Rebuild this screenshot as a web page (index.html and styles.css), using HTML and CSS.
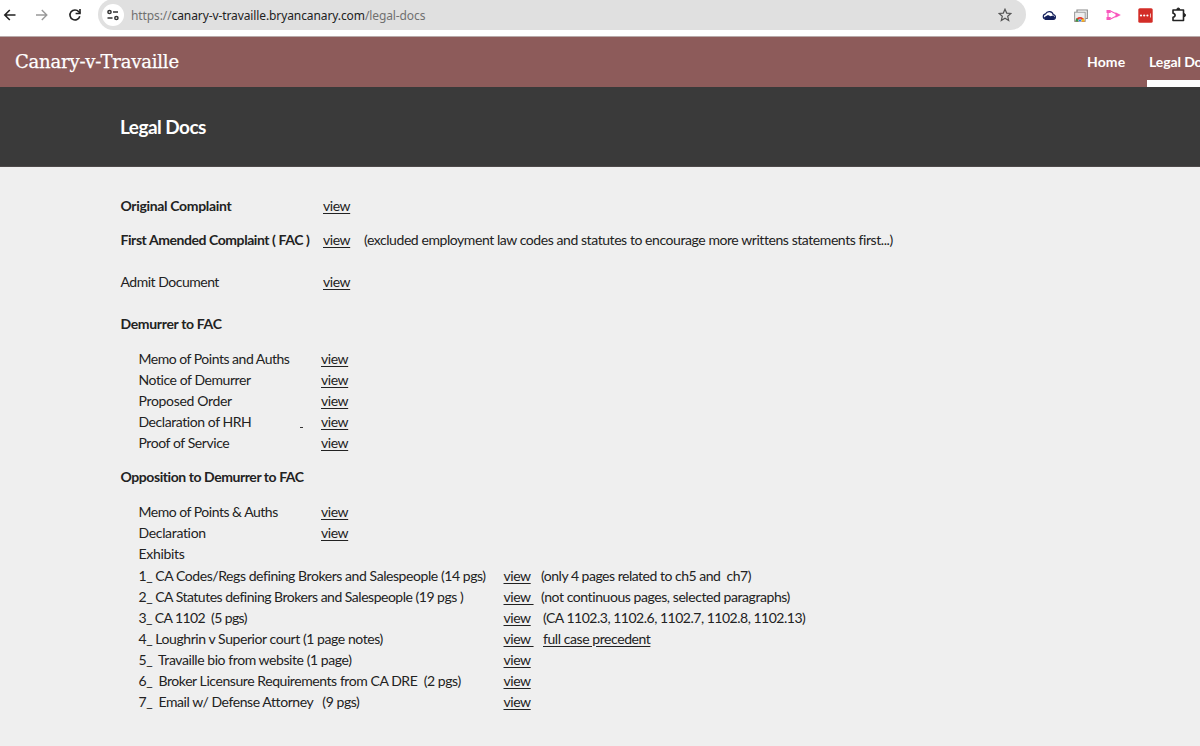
FILE: index.html
```html
<!DOCTYPE html>
<html lang="en">
<head>
<meta charset="utf-8">
<title>Legal Docs</title>
<link rel="stylesheet" href="styles.css">
</head>
<body>
<div class="browser">
  <svg class="nav-icon back" width="14" height="14" viewBox="0 0 14 14"><path d="M12.5 7H2M6.8 2 1.8 7l5 5" fill="none" stroke="#222" stroke-width="1.6"/></svg>
  <svg class="nav-icon forward" width="14" height="14" viewBox="0 0 14 14"><path d="M1 7h10.5M6.8 2l5 5-5 5" fill="none" stroke="#999" stroke-width="1.4"/></svg>
  <svg class="nav-icon reload" width="14" height="14" viewBox="0 0 14 14"><path d="M11.8 8.3A5 5 0 1 1 10.8 3.7L12 5" fill="none" stroke="#222" stroke-width="1.6"/><path d="M12 1v4.500H7.600" fill="none" stroke="#222" stroke-width="1.600"/></svg>
  <div class="address">
    <span class="site-info"><svg width="14" height="12" viewBox="0 0 14 12" fill="none" stroke="#333" stroke-width="1.5"><circle cx="3.5" cy="3" r="1.6"/><path d="M7 3h5M1.5 9h5"/><circle cx="10.4" cy="9" r="1.6"/></svg></span>
    <span class="url"><span class="dim">https://</span>canary-v-travaille.bryancanary.com<span class="dim">/legal-docs</span></span>
    <svg class="star" width="14" height="14" viewBox="0 0 14 14"><path d="M7 1.2l1.7 3.9 4.2.4-3.2 2.8 1 4.2L7 10.3l-3.7 2.2 1-4.2L1.1 5.5l4.2-.4z" fill="none" stroke="#555" stroke-width="1.2"/></svg>
  </div>
  <div class="extensions">
    <svg width="14" height="12" viewBox="0 0 14 12"><path d="M3.5 10.3h7.5a2.3 2.3 0 0 0 .2-4.6A4.1 4.1 0 0 0 3.6 4.8a2.8 2.8 0 0 0-.1 5.5z" fill="#fff" stroke="#14205c" stroke-width="1.2"/><path d="M2 8.3l4-2.3 2.500 1.200 2.700-.7 2 2-.8 1.700H3z" fill="#14205c"/></svg>
    <svg width="14" height="13" viewBox="0 0 14 13"><path d="M3 3V1h10.300v8.500h-2" fill="none" stroke="#8a8a8a" stroke-width="1.2"/><rect x=".6" y="3.2" width="10.6" height="9.2" fill="#eee" stroke="#999"/><path d="M1.500 12.400a4.500 4.500 0 0 1 9 0z" fill="#e33b2e"/><path d="M1.500 12.400a4.500 4.500 0 0 1 1.200-3.100L6 12.400z" fill="#2b9e4b"/><path d="M10.500 12.400a4.500 4.500 0 0 0-1.200-3.100L6 12.400z" fill="#fbc116"/><circle cx="6" cy="11.500" r="1.500" fill="#3478e5" stroke="#fff" stroke-width=".5"/></svg>
    <svg width="15" height="12" viewBox="0 0 15 12"><path d="M.5 1h4.200v3H.5zM.5 8h4.200v3H.5z" fill="#f957bd"/><path d="M4.500 2 10 4.800M4.500 10 10 7.200M2 4v4" fill="none" stroke="#f957bd" stroke-width="1.2"/><path d="M9.500 3.300 14.800 6l-5.300 2.700z" fill="#f957bd"/></svg>
    <svg width="15" height="15" viewBox="0 0 15 15"><rect x=".3" y=".3" width="14.4" height="14.4" rx="1.5" fill="#d32d27"/><g fill="#fff"><circle cx="3" cy="7.5" r="1.1"/><circle cx="6.2" cy="7.5" r="1.1"/><circle cx="9.4" cy="7.5" r="1.1"/><path d="M12 5.600h.7v3.800H12z"/></g></svg>
    <svg width="16" height="16" viewBox="0 0 16 16"><path d="M2 3h10.500v10.500H2v-3.300c2.800-.4 2.800-3.500 0-3.900z" fill="none" stroke="#222" stroke-width="1.6" stroke-linejoin="round"/><path d="M5.800 2.500a1.500 1.500 0 0 1 3 0zM13 6.700a1.500 1.500 0 0 1 0 3z" fill="#222" stroke="#222"/></svg>
  </div>
</div>
<header class="site-header">
  <div class="brand">Canary-v-Travaille</div>
  <nav class="menu"><a class="home">Home</a><a class="current">Legal Docs</a></nav>
</header>
<div class="banner"><h1>Legal Docs</h1></div>
<main class="docs">
  <div class="row main-row"><b class="snug">Original Complaint</b><a>view</a></div>
  <div class="row main-row fac"><b>First Amended Complaint ( FAC )</b><a>view</a><span>(excluded employment law codes and statutes to encourage more writtens statements first...)</span></div>
  <div class="row main-row admit"><span class="tight">Admit Document</span><a>view</a></div>
  <h2 class="demurrer snug">Demurrer to FAC</h2>
  <div class="group">
    <div class="row"><span class="tight">Memo of Points and Auths</span><a>view</a></div>
    <div class="row"><span>Notice of Demurrer</span><a>view</a></div>
    <div class="row"><span class="snug">Proposed Order</span><a>view</a></div>
    <div class="row"><span class="split"><span>Declaration of HRH</span><span class="dash"></span></span><a>view</a></div>
    <div class="row"><span>Proof of Service</span><a>view</a></div>
  </div>
  <h2 class="opposition">Opposition to Demurrer to FAC</h2>
  <div class="group">
    <div class="row"><span class="tight">Memo of Points &amp; Auths</span><a>view</a></div>
    <div class="row"><span class="snug">Declaration</span><a>view</a></div>
    <div class="row"><span class="snug">Exhibits</span></div>
    <div class="row exhibit"><span>1_ CA Codes/Regs defining Brokers and Salespeople (14 pgs)</span><a>view</a><span class="tight">(only 4 pages related to ch5 and&nbsp; ch7)</span></div>
    <div class="row exhibit"><span class="tight">2_ CA Statutes defining Brokers and Salespeople (19 pgs )</span><a>view&nbsp;</a><span>(not continuous pages, selected paragraphs)</span></div>
    <div class="row exhibit"><span class="tightest">3_ CA 1102&nbsp; (5 pgs)</span><a>view</a><span class="inset tight">(CA 1102.3, 1102.6, 1102.7, 1102.8, 1102.13)</span></div>
    <div class="row exhibit"><span>4_ Loughrin v Superior court (1 page notes)</span><a>view&nbsp;</a><a class="inset">full case precedent</a></div>
    <div class="row exhibit"><span>5_&nbsp; Travaille bio from website (1 page)</span><a>view</a></div>
    <div class="row exhibit"><span>6_&nbsp; Broker Licensure Requirements from CA DRE&nbsp; (2 pgs)</span><a>view</a></div>
    <div class="row exhibit"><span>7_&nbsp; Email w/ Defense Attorney&nbsp;&nbsp; (9 pgs)</span><a>view</a></div>
  </div>
</main>
</body>
</html>
```
FILE: styles.css
```css
* { box-sizing: border-box; }
body { margin: 0; height: 746px; overflow: hidden; background: #efefef; color: #222; font-family: Lato, sans-serif; }
svg { display: block; flex: none; }

.browser { height: 37px; padding: 0 13px 6px 3px; display: flex; align-items: center; background: #fff; border-bottom: 1px solid #b9aaaa; }
.forward { margin-left: 18px; }
.reload { margin-left: 19px; }
.address { width: 928px; height: 31px; margin-left: 16px; margin-top: -1px; padding: 0 14px 0 4px; border-radius: 16px; background: #e0e0e0; display: flex; align-items: center; }
.site-info { width: 22px; height: 22px; border-radius: 50%; background: #fff; display: grid; place-items: center; }
.url { flex: 1; margin-left: 7px; padding-top: 2px; font: 12px/16px "Noto Sans", sans-serif; letter-spacing: -0.1px; color: #222; white-space: nowrap; }
.dim { color: #707070; }
.extensions { flex: 1; margin-left: 16px; display: flex; align-items: center; justify-content: space-between; }

.site-header { height: 50px; padding-left: 15px; background: #8d5b5a; color: #fff; display: flex; justify-content: space-between; }
.brand { font: 18px/50px "DejaVu Serif", serif; letter-spacing: -0.2px; white-space: nowrap; -webkit-text-stroke: 0.25px #fff; }
.menu { display: flex; width: 113px; flex: none; font-size: 14px; font-weight: 700; line-height: 49px; white-space: nowrap; }
.home { width: 60px; flex: none; letter-spacing: 0.1px; }
.current { flex: none; width: 90px; padding-left: 2px; height: 50px; border-bottom: 7px solid #fff; letter-spacing: -0.1px; }

.banner { height: 80px; padding-left: 120px; background: #3a3a3a; border-bottom: 1px solid #4d4949; color: #fff; }
h1 { margin: 0; font-size: 19px; line-height: 80px; font-weight: 700; letter-spacing: -0.55px; }

.docs { padding: 28px 0 0 120.5px; font-size: 14px; line-height: 21px; letter-spacing: -0.43px; }
.row { display: grid; grid-template-columns: 182.5px 43px 1fr; height: 21px; white-space: pre; }
.row a { justify-self: start; text-decoration: underline; text-decoration-thickness: 1px; text-underline-offset: 2px; }
.main-row { grid-template-columns: 202.5px 41px 1fr; }
.row b, h2 { font-weight: 700; font-size: 14px; }
.fac { margin-top: 13px; }
.admit { margin-top: 21px; }
h2 { margin: 0; line-height: 21px; }
.demurrer { margin-top: 21px; }
.opposition { margin-top: 13px; }
.group { margin-top: 14px; padding-left: 18px; }
.opposition + .group { padding-top: 0.4px; }
.opposition + .group .row { height: 21.06px; }
.exhibit { grid-template-columns: 365px 37.5px 1fr; }
.inset { margin-left: 2px; }
.snug { letter-spacing: -0.33px; }
.tight { letter-spacing: -0.49px; }
.tightest { letter-spacing: -0.6px; }
.split { display: flex; justify-content: space-between; padding-right: 18px; }
.dash { width: 3px; height: 1px; margin-top: 16px; background: #333; }
```
